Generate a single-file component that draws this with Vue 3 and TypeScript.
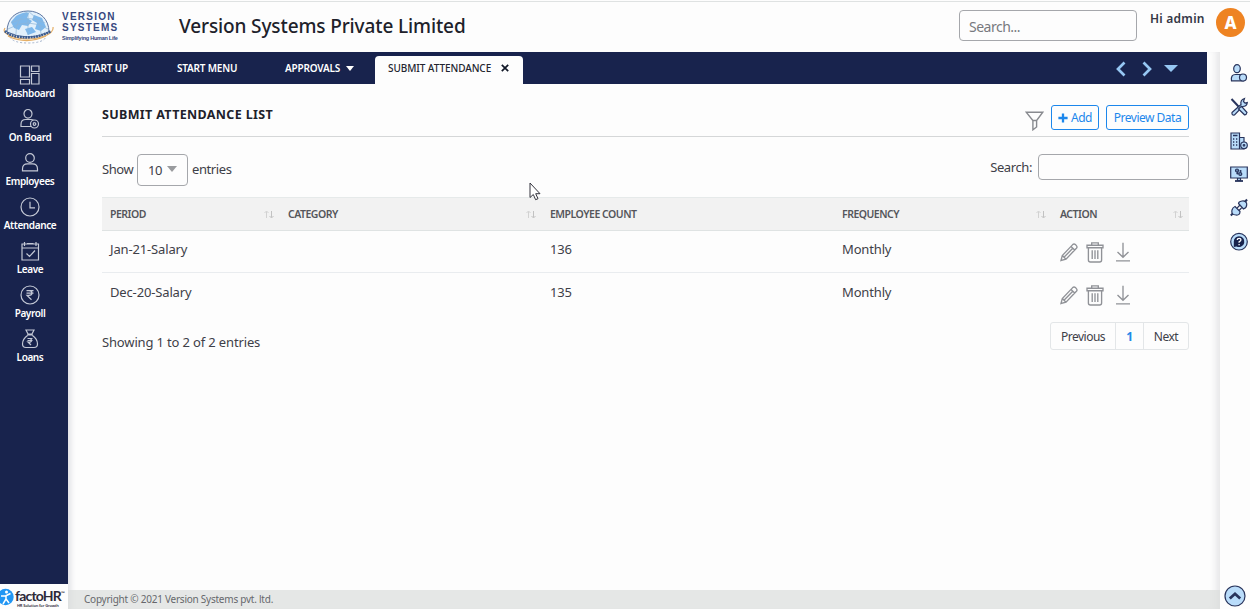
<script lang="ts" setup>
import { ref } from 'vue'

type MenuItem = {
  label: string
  icon: string
}

type Row = {
  period: string
  category: string
  count: number
  frequency: string
}

type Column = {
  label: string
  sortable: boolean
  width: number
}

const menu: MenuItem[] = [
  { label: 'Dashboard', icon: 'M1.500 2h9v11h-9zM1.500 15.500h9v4.500h-9zM12.500 2h7.500v5.500h-7.500zM12.500 9.500h7.500v10.500h-7.500z' },
  {
    label: 'On Board',
    icon: 'M9 1.5a4 4.3 0 1 1 0 8.6a4 4.3 0 1 1 0-8.6M12 18.5H2v-2.2q0-4.8 4.8-4.8h5q1.8 0 3 .8M15.5 12a4 4 0 1 1 0 8a4 4 0 1 1 0-8M15.5 14.7a1.3 1.3 0 1 1 0 2.6a1.3 1.3 0 1 1 0-2.6',
  },
  {
    label: 'Employees',
    icon: 'M11 1.7a4.3 4.3 0 1 1 0 8.6a4.3 4.3 0 1 1 0-8.6M3.5 18.9v-2q0-5 5-5h5q5 0 5 5v2z',
  },
  { label: 'Attendance', icon: 'M11 2a9 9 0 1 1 0 18a9 9 0 1 1 0-18M11 5.8v6h5' },
  {
    label: 'Leave',
    icon: 'M3 4h16.500v16H3zM3 8h16.500M5.5 2v4M17 2v4M8 3.500h6.500M7.500 13.500l3 3 5.5-6',
  },
  {
    label: 'Payroll',
    icon: 'M11 2a9 9 0 1 1 0 18a9 9 0 1 1 0-18M7.5 6.7h7M7.5 9.2h7M8 6.7h2q3 0 3 2.3t-3 2.4H8l4.5 4.3',
  },
  {
    label: 'Loans',
    icon: 'M7 2h8l-2 4H9zM8 7h6M8.5 7.500Q3.500 11 3.500 16q0 3.5 3.500 3.500h8q3.500 0 3.500-3.5 0-5-5-8.500M8.5 10.500h5M8.5 12.500h5M10 10.500q2.5 0 2.5 2T9 14l3 3',
  },
]

const tabs = ['START UP', 'START MENU', 'APPROVALS']

const columns: Column[] = [
  { label: 'Period', sortable: true, width: 178 },
  { label: 'Category', sortable: true, width: 262 },
  { label: 'Employee Count', sortable: false, width: 292 },
  { label: 'Frequency', sortable: true, width: 218 },
  { label: 'Action', sortable: true, width: 137 },
]

const rows = ref<Row[]>([
  { period: 'Jan-21-Salary', category: '', count: 136, frequency: 'Monthly' },
  { period: 'Dec-20-Salary', category: '', count: 135, frequency: 'Monthly' },
])
</script>

<template>
  <div class="page">
    <header class="header">
      <div class="brand">
        <svg class="globe" width="52" height="38" viewBox="0 0 52 38">
          <path d="M4 23C4 9 13 2 25 2s21 8 21 21q-20 10-42 0z" fill="#e2f0fb" stroke="#5f78a3" />
          <path d="M13 7q8-5 13-3l-2 5 5 3-4 5-6-1-3 5-5-2-3-6zM31 6l8 3 4 9-5 4-6-2 2-6-5-3zM22 20l7-2 4 5-8 3z" fill="#7db8ec" />
          <path d="M5 20q20-12 40 0M8 14q18-9 34 0M25 2q-13 9-12 23M25 2q13 9 13 23M25 2v24" fill="none" stroke="#8db5d8" stroke-width=".7" />
          <path d="M7 28q3 6 18 6t18-6" fill="none" stroke="#a3b3cc" stroke-dasharray="2 2" />
          <path d="M2 19q-3 4 5 8 18 6 35 0 9-4 8-9" fill="none" stroke="#e5af66" stroke-width="1.200" />
          <path d="M2 22q5 5 15 6 17 2 31-6" fill="none" stroke="#3c5b8d" stroke-width="2.600" stroke-dasharray="2 .7" />
          <path d="M5 27q18 9 38 0" fill="none" stroke="#e5af66" stroke-width="1.3" />
        </svg>
        <div class="brand-text">
          <b>VERSION</b>
          <b>SYSTEMS</b>
          <small>Simplifying Human Life</small>
        </div>
      </div>
      <h1>Version Systems Private Limited</h1>
      <input class="top-search" placeholder="Search..." />
      <span class="greeting">Hi admin</span>
      <span class="avatar">A</span>
    </header>

    <div class="body">
      <aside class="sidebar">
        <nav>
          <a v-for="item in menu" :key="item.label">
            <svg width="22" height="22" viewBox="0 0 22 22"><path :d="item.icon" /></svg>
            <span>{{ item.label }}</span>
          </a>
        </nav>
        <div class="factohr">
          <svg width="15" height="18" viewBox="0 0 15 18">
            <circle cx="5.500" cy="9" r="8.2" fill="#2196f3" />
            <circle cx="6.5" cy="4" r="1.5" fill="#fff" />
            <path d="M1 8l4.500 0 5-2.500M6 8v3l-3 5M6 11l3 4" fill="none" stroke="#fff" stroke-width="1.5" />
          </svg>
          <div class="factohr-text">
            <b>factoHR<sup>™</sup></b>
            <small>HR Solution for Growth</small>
          </div>
        </div>
      </aside>

      <div class="center">
        <div class="tabbar">
          <a v-for="tab in tabs" :key="tab" class="tab">
            <span>{{ tab }}</span>
            <i v-if="tab === 'APPROVALS'" class="caret" />
          </a>
          <a class="tab is-current">
            <span>SUBMIT ATTENDANCE</span>
            <svg width="8" height="8" viewBox="0 0 8 8"><path d="M.8.8l6.4 6.4M7.2.8L.8 7.2" stroke="#111827" stroke-width="1.7" /></svg>
          </a>
          <div class="tab-arrows">
            <svg width="10" height="16" viewBox="0 0 10 16"><path d="M8.5 1.5L2 8l6.5 6.5" /></svg>
            <svg width="10" height="16" viewBox="0 0 10 16"><path d="M1.5 1.5L8 8l-6.5 6.5" /></svg>
            <i class="caret blue" />
          </div>
        </div>

        <main class="content">
          <div class="title-row">
            <h2>SUBMIT ATTENDANCE LIST</h2>
            <div class="actions">
              <svg class="funnel" width="19" height="20" viewBox="0 0 19 20">
                <path d="M1.2 1.2h16.6l-6.2 8.3v6.5l-3.7 2.8V9.5zM8 9.500h3.500" />
              </svg>
              <button class="add">
                <svg width="10" height="10" viewBox="0 0 10 10"><path d="M5 .4v9.2M.4 5h9.2" stroke="#1c87ec" stroke-width="2.3" /></svg>
                <span>Add</span>
              </button>
              <button class="preview"><span>Preview Data</span></button>
            </div>
          </div>

          <div class="table-tools">
            <div class="length">
              <span class="show">Show</span>
              <div class="select"><span>10</span><i class="caret gray" /></div>
              <span class="entries">entries</span>
            </div>
            <label class="search"><span>Search:</span><input /></label>
          </div>

          <table>
            <colgroup>
              <col v-for="col in columns" :key="col.label" :style="{ width: col.width + 'px' }" />
            </colgroup>
            <thead>
              <tr>
                <th v-for="col in columns" :key="col.label">
                  <div>
                    <span>{{ col.label }}</span>
                    <svg v-if="col.sortable" width="10" height="9" viewBox="0 0 10 9">
                      <path d="M2.5 8V1.5M.5 3l2-2 2 2" stroke="#d2d2d2" />
                      <path d="M7.5 1v6.5M5.5 6l2 2 2-2" stroke="#c2c2c2" />
                    </svg>
                  </div>
                </th>
              </tr>
            </thead>
            <tbody>
              <tr v-for="row in rows" :key="row.period">
                <td>{{ row.period }}</td>
                <td>{{ row.category }}</td>
                <td>{{ row.count }}</td>
                <td>{{ row.frequency }}</td>
                <td class="icons">
                  <div>
                    <svg width="18" height="20" viewBox="0 0 18 20">
                      <path d="M1 18.500l1.300-5L12.700 2.600q1.300-1.300 2.700 0l1 1q1.200 1.300 0 2.700L6 17.200zM2.300 13.500L6 17.200M11 4.400l3.700 3.700M4 15.300L13 6" />
                    </svg>
                    <svg width="18" height="21" viewBox="0 0 18 21">
                      <path d="M1 3.2h16v2.5H1zM5.7 3V.9h6.6V3M2.4 6v12q0 2 2 2h9.2q2 0 2-2V6M6.2 8.3v8.8M9 8.3v8.8M11.8 8.3v8.8" />
                    </svg>
                    <svg width="16" height="20" viewBox="0 0 16 20">
                      <path d="M8 .8v14M2.5 10L8 15.2l5.5-5.2M1 18.8h14" stroke-width="1.6" />
                    </svg>
                  </div>
                </td>
              </tr>
            </tbody>
          </table>

          <div class="table-foot">
            <span class="info">Showing 1 to 2 of 2 entries</span>
            <div class="pager">
              <a class="prev"><span>Previous</span></a>
              <a class="num">1</a>
              <a class="next"><span>Next</span></a>
            </div>
          </div>
        </main>

        <footer><span>Copyright © 2021 Version Systems pvt. ltd.</span></footer>
      </div>

      <aside class="rail">
        <svg width="18" height="20" viewBox="0 0 18 20">
          <ellipse cx="7" cy="5.7" rx="3.3" ry="4" />
          <path d="M1.500 17.800q-1-6.300 4-6.300h4.500q3 0 3.500 3v3.300z" />
          <circle cx="13" cy="14.500" r="3.500" />
        </svg>
        <svg width="18" height="20" viewBox="0 0 18 20">
          <path d="M2 15.500L11 7.500q-1-4.500 3.500-6l-1 3 1.500 1.500 2.300-.5q-.3 4-4.800 4L4.500 18q-3 .5-2.500-2.500z" />
          <path d="M10 10.500l1.500-1.200 5.500 6.200q-.5 2.500-2.500 2.300L8.500 12z" />
          <path d="M1.500 2l7 7.500" stroke-width="2" />
        </svg>
        <svg width="18" height="20" viewBox="0 0 18 20">
          <path d="M1 2h8.500v16H1zM9.500 6.500h4.500V18H9.500z" />
          <path d="M3 4.500h4.500M3 8h1.300M6 8h1.300M3 11h1.300M6 11h1.300M3 14h1.300M6 14h1.300" stroke-width="1.700" />
          <circle cx="14" cy="14.300" r="3.300" />
          <circle cx="14" cy="14.300" r=".8" />
        </svg>
        <svg width="18" height="20" viewBox="0 0 18 20">
          <path d="M.7 3h16.600v11H.7zM7.500 14.200h3v2.300h-3z" />
          <path d="M5 17h8" stroke-width="1.800" />
          <g fill="#6d8db5"><circle cx="7" cy="6.500" r="1.500" /><circle cx="10.300" cy="10" r="1.500" /><circle cx="7.500" cy="9.300" r=".6" /><circle cx="10.500" cy="7" r=".5" /></g>
        </svg>
        <svg width="18" height="20" viewBox="0 0 18 20">
          <path d="M.8 17.500l2.500-2.500M14.500 4.500l2.500-3" stroke-width="2" />
          <path d="M5 8.500l5 5q0 4-4 3.500-5 0-4-5 .8-2.800 3-3.500zM8.500 5.500l5 5.500q4-1.500 3-6-1-2.500-4.500-2-3.500.5-3.500 2.500zM6.800 10.300l2.700-2.800M9 12.500l2.500-2.500" />
        </svg>
        <svg width="18" height="20" viewBox="0 0 18 20">
          <circle cx="9" cy="9.700" r="8.300" />
          <path d="M9 4.200a5.400 5.400 0 1 1-2.500 10.200l-2.700.7v-5.500A5.400 5.400 0 0 1 9 4.200z" fill="#18234d" stroke="none" />
          <path d="M7.300 8q0-1.700 1.800-1.700T10.900 8q0 1-1.800 1.800v.9M9.100 12v1.200" fill="none" stroke="#fff" stroke-width="1.300" />
        </svg>
        <svg class="to-top" width="22" height="22" viewBox="0 0 22 22">
          <circle cx="11" cy="11" r="10" />
          <path d="M5.800 13.500L11 8.800l5.200 4.700" fill="none" stroke-width="2.800" />
        </svg>
      </aside>
    </div>

    <svg class="cursor" width="12" height="19" viewBox="0 0 12 19">
      <path d="M1 1v14.500l3.300-3 2.300 5.200 2.400-1-2.300-5H11z" fill="#fff" stroke="#33333d" />
    </svg>
  </div>
</template>

<style>
body {
  margin: 0;
  overflow: hidden;
}
</style>

<style scoped>
.page {
  position: relative;
  display: flex;
  flex-direction: column;
  width: 1250px;
  height: 609px;
  overflow: hidden;
  background: #fdfdfd;
  color: #3e4048;
  font-family: 'Noto Sans', 'Open Sans', sans-serif;
  font-size: 13px;
  letter-spacing: -0.15px;
  white-space: nowrap;
}

.page *,
.page {
  box-sizing: border-box;
}

svg {
  display: block;
  flex: none;
}

/* header */
.header {
  display: flex;
  align-items: flex-start;
  height: 52px;
  border-top: 1px solid #fdfdfd;
  box-shadow: inset 0 1px #dfe2e2;
}

.brand {
  display: flex;
  width: 179px;
  padding: 8px 0 0 3px;
}

.brand-text {
  display: flex;
  flex-direction: column;
  padding: 2px 0 0 7px;
  color: #35477d;
  font-family: 'Liberation Sans', sans-serif;
}

.brand-text b {
  font-size: 10px;
  line-height: 11px;
  letter-spacing: 1.25px;
}

.brand-text small {
  padding-top: 2px;
  font-size: 5.5px;
  line-height: 7px;
  font-weight: bold;
  letter-spacing: -0.25px;
}

h1 {
  width: 780px;
  margin: 0;
  padding-top: 11px;
  color: #20212a;
  font-size: 19px;
  line-height: 28px;
  font-weight: 500;
  letter-spacing: -0.12px;
}

input {
  border: 1px solid #a5a7ab;
  border-radius: 4px;
  background: #fdfdfd;
  outline: 0;
}

.top-search {
  width: 178px;
  height: 31px;
  margin-top: 9px;
  padding: 2px 9px 0;
  font: 14px 'Noto Sans', sans-serif;
  letter-spacing: -0.5px;
}

.top-search::placeholder {
  color: #77797e;
}

.greeting {
  width: 66px;
  margin: 9px 0 0 13px;
  color: #343746;
  font-size: 12px;
  line-height: 17px;
  font-weight: 600;
  letter-spacing: 0.25px;
}

.avatar {
  width: 29px;
  height: 29px;
  margin-top: 7px;
  border-radius: 50%;
  background: #ee8322;
  color: #fff;
  font-size: 17px;
  line-height: 29px;
  font-weight: 800;
  text-align: center;
}

.body {
  display: flex;
  height: 557px;
}

/* left menu */
.sidebar {
  display: flex;
  flex-direction: column;
  width: 68px;
  background: #18234d;
}

.sidebar nav {
  flex: 1;
  padding-top: 12px;
}

.sidebar a {
  display: flex;
  flex-direction: column;
  align-items: center;
  width: 60px;
  height: 44px;
  color: #fff;
  font-size: 10px;
  line-height: 14px;
  font-weight: 600;
  letter-spacing: -0.4px;
}

.sidebar a path {
  fill: none;
  stroke: #c3c8d5;
  stroke-width: 1.2;
}

.factohr {
  display: flex;
  height: 25px;
  padding-top: 4px;
  background: #fdfdfd;
  color: #2e2a38;
}

.factohr-text {
  display: flex;
  flex-direction: column;
}

.factohr b {
  height: 15px;
  font: 700 14px/15px Lato, sans-serif;
  letter-spacing: -0.8px;
}

.factohr sup {
  font-size: 5px;
  line-height: 0;
}

.factohr small {
  padding-left: 2px;
  font-size: 4px;
  line-height: 5px;
  font-weight: 600;
}

/* tabs */
.center {
  display: flex;
  flex-direction: column;
  width: 1152px;
  box-shadow: inset 7px 0 6px -5px #d9dbe0, inset -9px 0 7px -5px #e6e6e8;
}

.tabbar {
  display: flex;
  width: 1139px;
  height: 32px;
  background: #18234d;
}

.tab {
  display: flex;
  align-items: center;
  gap: 6px;
  padding-left: 16px;
  color: #fff;
  font-size: 10px;
  font-weight: 600;
  letter-spacing: -0.2px;
}

.tab:nth-child(1) {
  width: 93px;
}

.tab:nth-child(2) {
  width: 108px;
}

.tab:nth-child(3) {
  width: 106px;
}

.tab.is-current {
  width: 148px;
  height: 28px;
  margin-top: 4px;
  padding: 0 0 4px 13px;
  gap: 10px;
  border-radius: 4px 4px 0 0;
  background: #fdfdfd;
  color: #23252f;
  font-weight: 500;
  letter-spacing: -0.07px;
}

.caret {
  width: 0;
  border: 4px solid transparent;
  border-top: 5px solid #fff;
  border-bottom: 0;
}

.tab-arrows {
  display: flex;
  align-items: center;
  gap: 16px;
  margin-left: auto;
  padding: 1px 29px 0 0;
}

.tab-arrows path {
  fill: none;
  stroke: #96c7f3;
  stroke-width: 2.7;
}

.caret.blue {
  margin-left: -4px;
  border-width: 7px 7px 0;
  border-top-color: #96c7f3;
}

/* content */
.content {
  flex: 1;
  width: 1121px;
  padding: 21px 0 0 34px;
}

.title-row {
  display: flex;
  justify-content: space-between;
  height: 32px;
  border-bottom: 1px solid #d5d7d8;
}

h2 {
  margin: 0;
  color: #20212a;
  font-size: 12.500px;
  line-height: 20px;
  font-weight: 700;
  letter-spacing: 0.35px;
}

.actions {
  display: flex;
}

.funnel {
  margin: 6px 7px 0 0;
}

.funnel path {
  fill: none;
  stroke: #888a8f;
  stroke-width: 1.4;
}

button {
  display: flex;
  align-items: center;
  justify-content: center;
  height: 25px;
  padding: 0;
  border: 1px solid #1c87ec;
  border-radius: 3px;
  background: #fdfdfd;
  color: #1c87ec;
  font: 12px 'Noto Sans', sans-serif;
  letter-spacing: -0.5px;
}

.add {
  width: 48px;
  gap: 3px;
}

.preview {
  width: 83px;
  margin-left: 7px;
}

.table-tools {
  display: flex;
  justify-content: space-between;
  height: 60px;
  letter-spacing: -0.4px;
}

.length {
  display: flex;
  padding-top: 17px;
  line-height: 31px;
}

.show {
  width: 35px;
}

.select {
  display: flex;
  width: 51px;
  height: 32px;
  margin-right: 4px;
  padding-left: 10px;
  border: 1px solid #a5a7ab;
  border-radius: 4px;
}

.select span {
  width: 19px;
}

.caret.gray {
  height: 0;
  margin-top: 11px;
  border-width: 6px 5px 0;
  border-top-color: #999b9e;
}

.search {
  display: flex;
  gap: 6px;
  padding-top: 17px;
  line-height: 26px;
}

.search input {
  width: 151px;
  height: 26px;
}

table {
  width: 1087px;
  border-collapse: separate;
  border-spacing: 0;
  table-layout: fixed;
}

th {
  height: 34px;
  padding: 0 6px 0 8px;
  border-top: 1px solid #e6eaea;
  border-bottom: 1px solid #dfe3e3;
  background: #f2f2f2;
  color: #55565b;
  font-size: 10.500px;
  font-weight: 600;
  letter-spacing: -0.5px;
  text-align: left;
  text-transform: uppercase;
}

th div {
  display: flex;
  align-items: center;
  justify-content: space-between;
}

th path {
  fill: none;
}

td {
  height: 42px;
  padding: 0 8px 6px;
  border-bottom: 1px solid #e9ecef;
}

tr:last-child td {
  height: 43px;
  border: 0;
}

td.icons {
  padding: 1px 8px 0;
}

.icons div {
  display: flex;
  gap: 8px;
}

.icons svg:last-child {
  margin-left: 3px;
}

.icons path {
  fill: none;
  stroke: #909297;
  stroke-width: 1.35;
}

.table-foot {
  display: flex;
  justify-content: space-between;
  padding-top: 6px;
}

.info {
  padding-top: 10px;
  line-height: 20px;
}

.pager {
  display: flex;
  height: 28px;
  border: 1px solid #e3e6e8;
  border-radius: 3px;
  font-size: 12px;
  line-height: 28px;
  letter-spacing: -0.5px;
}

.pager a {
  text-align: center;
}

.prev {
  width: 64px;
}

.pager .num {
  width: 29px;
  border: solid #e3e6e8;
  border-width: 0 1px;
  color: #2288e8;
  font-weight: 700;
}

.next {
  width: 44px;
}

footer {
  height: 19px;
  padding-left: 16px;
  background: rgba(218, 221, 220, 0.7);
  color: #66676c;
  font-size: 10px;
  line-height: 18px;
  letter-spacing: -0.24px;
}

/* right icons */
.rail {
  display: flex;
  flex-direction: column;
  gap: 13.8px;
  width: 30px;
  padding: 11px 0 2px 10px;
}

.rail svg {
  fill: #b9dcfa;
  stroke: #28345c;
  stroke-width: 1.200;
}

.rail .to-top {
  margin: auto 0 0 -6px;
}

.cursor {
  position: absolute;
  top: 182px;
  left: 529px;
}
</style>
